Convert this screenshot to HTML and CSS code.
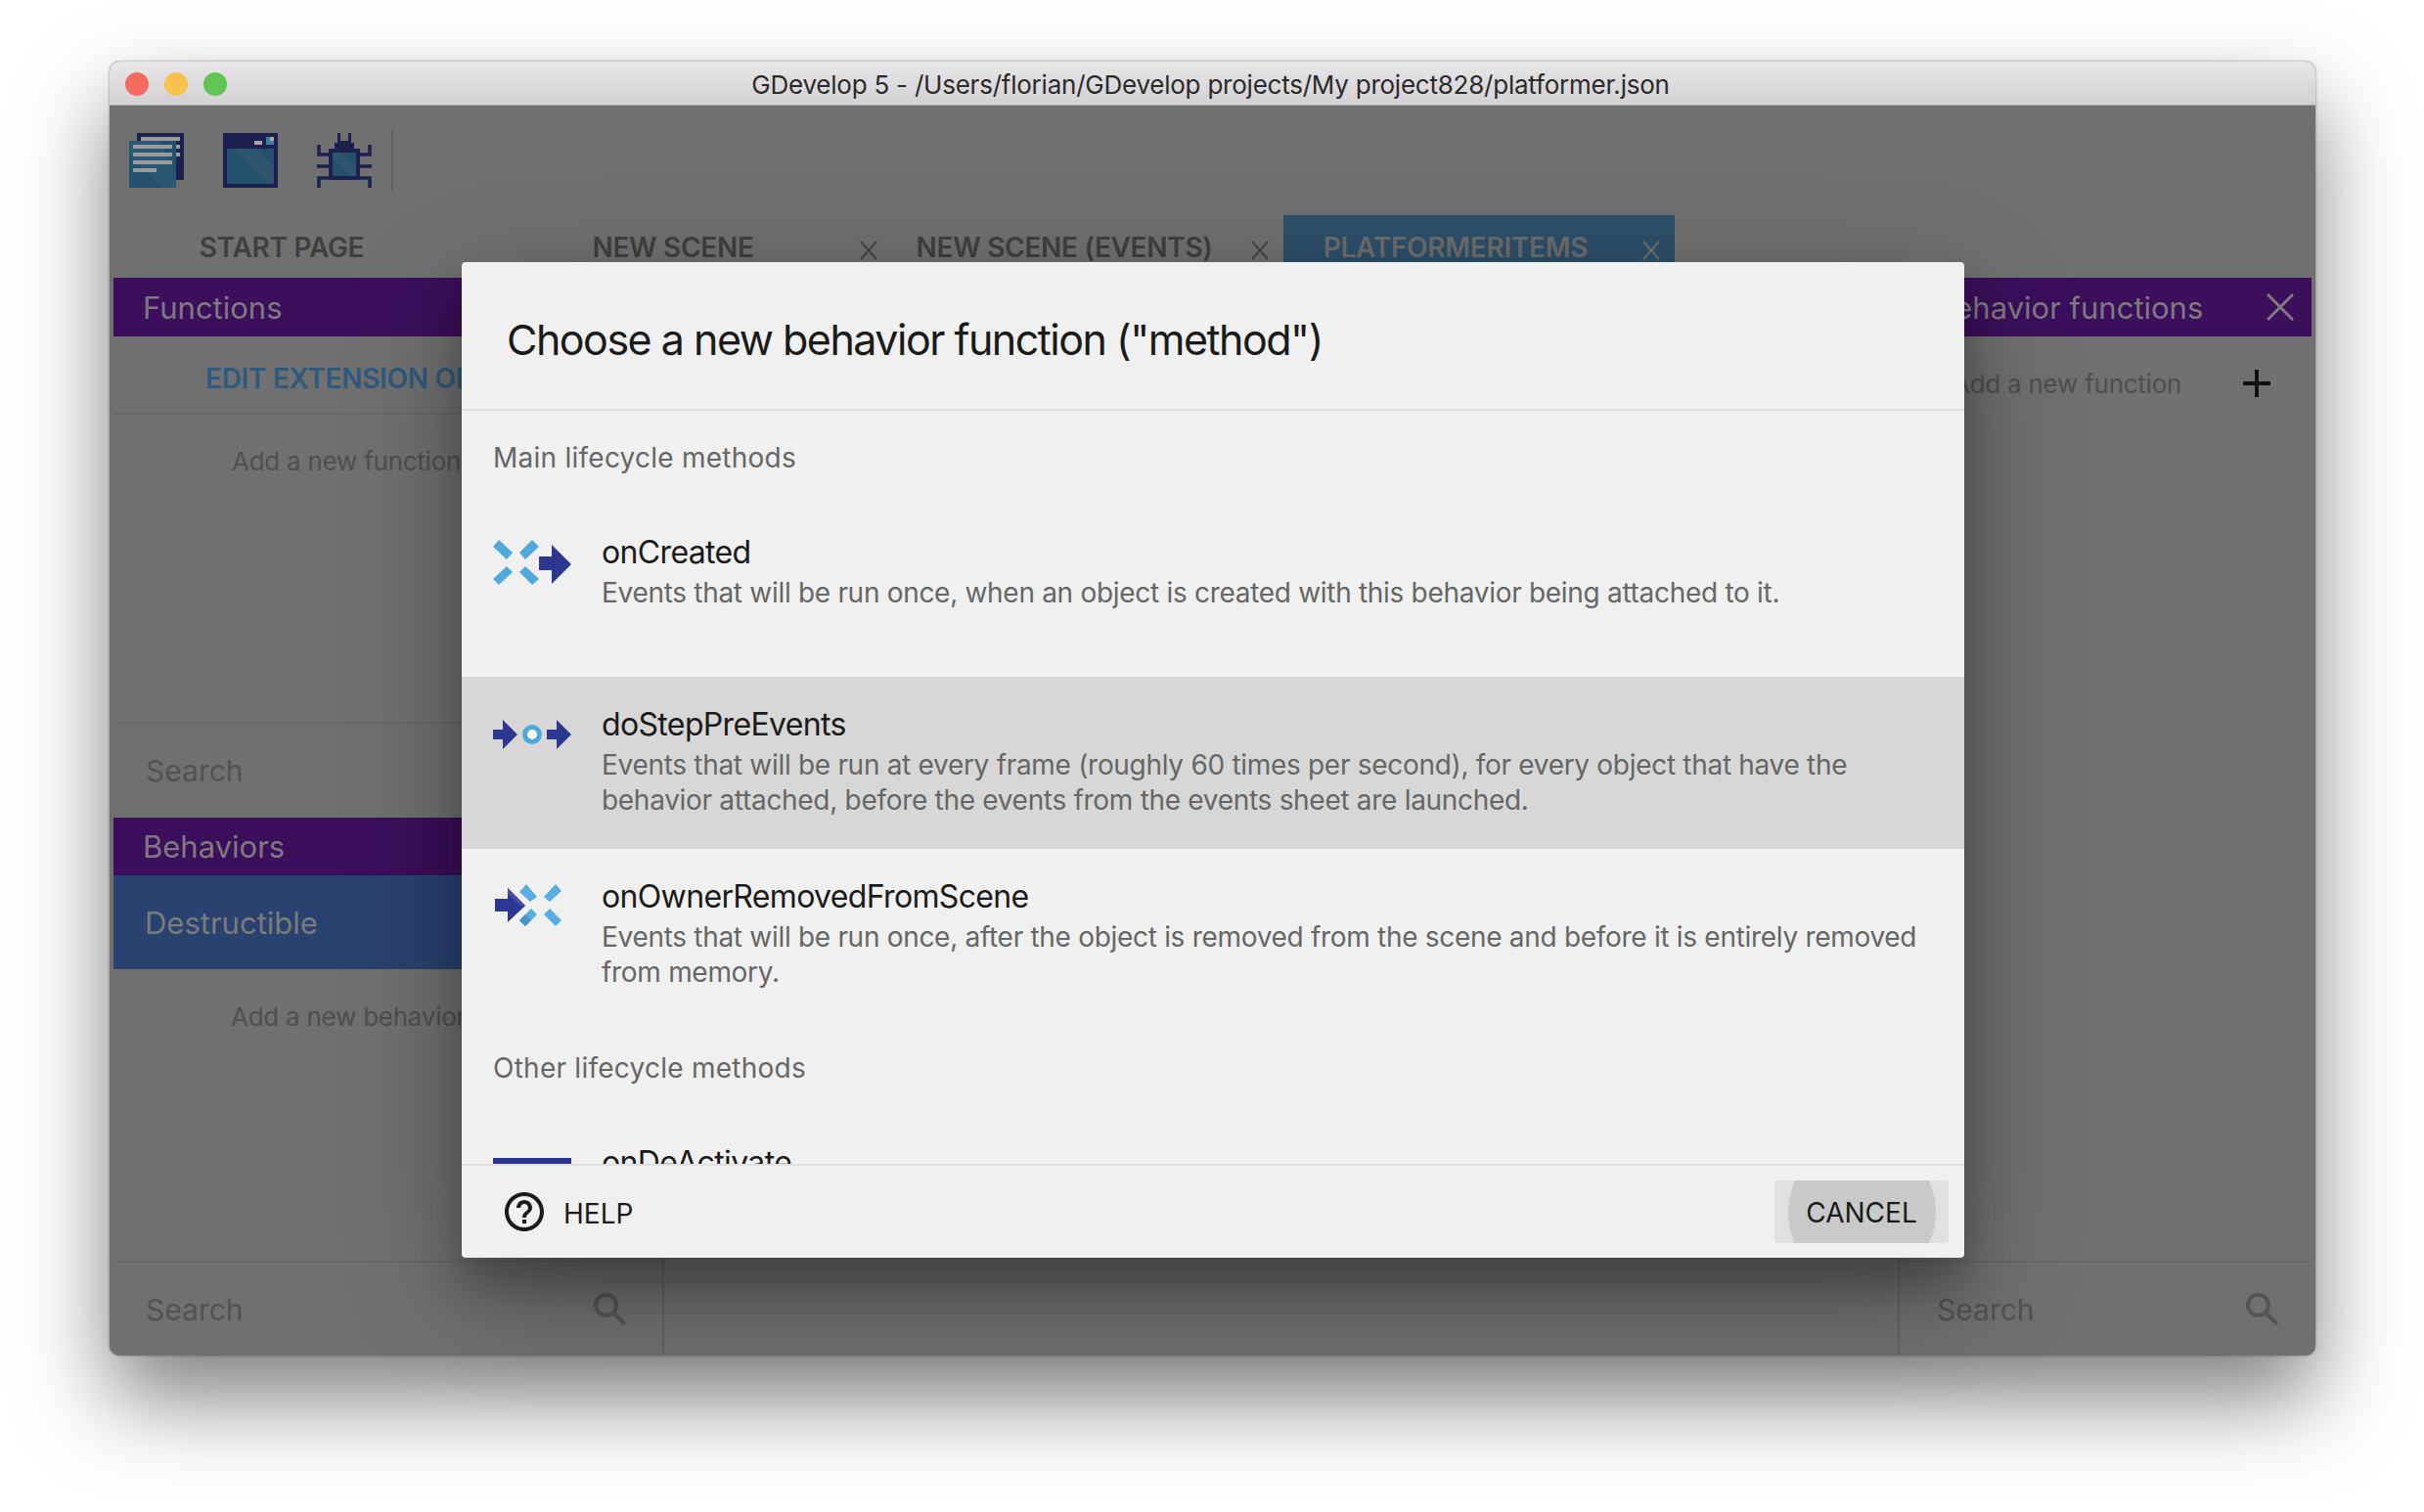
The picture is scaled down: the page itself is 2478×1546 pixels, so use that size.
FILE: index.html
```html
<!DOCTYPE html>
<html lang="en">
<head>
  <meta charset="UTF-8" />
  <title>GDevelop 5</title>
  <link rel="stylesheet" href="styles.css">
</head>
<body>
  <div class="window">
    <div class="titlebar">
      <div class="lights">
        <span class="light light-red"></span>
        <span class="light light-yellow"></span>
        <span class="light light-green"></span>
      </div>
      <div class="window-title">GDevelop 5 - /Users/florian/GDevelop projects/My project828/platformer.json</div>
    </div>

    <div class="toolbar">
      <svg class="tool-icon" viewBox="0 0 56 56">
        <rect x="8" y="0" width="48" height="48" fill="#1c2150"/>
        <rect x="12" y="4" width="40" height="4" fill="#9b9b9b"/>
        <rect x="48" y="12" width="4" height="4" fill="#9b9b9b"/>
        <rect x="48" y="20" width="4" height="4" fill="#9b9b9b"/>
        <rect x="0" y="8" width="48" height="48" fill="#23506b"/>
        <polygon points="0,8 32,8 48,40 48,56 34,56 0,24" fill="#2a5872"/>
        <rect x="4" y="12" width="40" height="4" fill="#9b9b9b"/>
        <rect x="4" y="20" width="40" height="4" fill="#9b9b9b"/>
        <rect x="4" y="28" width="40" height="4" fill="#9b9b9b"/>
        <rect x="4" y="36" width="24" height="4" fill="#9b9b9b"/>
      </svg>
      <svg class="tool-icon" viewBox="0 0 56 56">
        <rect width="56" height="56" fill="#1c2150"/>
        <rect x="4" y="16" width="48" height="36" fill="#23506b"/>
        <polygon points="12,16 36,16 52,36 52,52 46,52" fill="#30566f"/>
        <rect x="32" y="8" width="8" height="4" fill="#a9a9a9"/>
        <rect x="44" y="4" width="8" height="8" fill="#3e7f9f"/>
        <rect x="48" y="4" width="4" height="4" fill="#a9a9a9"/>
      </svg>
      <svg class="tool-icon" viewBox="0 0 56 56">
        <path d="M21 0h3v8h8V0h3v12h-14z" fill="#1c2150"/>
        <rect x="12" y="16" width="32" height="32" fill="#1c2150"/>
        <rect x="18" y="10" width="20" height="8" fill="#1c2150"/>
        <rect x="16" y="20" width="24" height="24" fill="#23506b"/>
        <polygon points="24,20 40,36 40,44 34,44 16,26 16,20" fill="#30566f"/>
        <path d="M2 12v10h10M54 12v10h-10M0 34h12M56 34h-12M2 56v-10h10M54 56v-10h-10" fill="none" stroke="#1c2150" stroke-width="3.5"/>
      </svg>
      <div class="toolbar-sep"></div>
    </div>

    <div class="tabs">
      <div class="tab"><span class="tab-label">START PAGE</span><span class="tab-close"></span></div>
      <div class="tab"><span class="tab-label">NEW SCENE</span><span class="tab-close"><svg viewBox="0 0 20 20"><path d="M2 1L18 19M18 1L2 19"/></svg></span></div>
      <div class="tab"><span class="tab-label">NEW SCENE (EVENTS)</span><span class="tab-close"><svg viewBox="0 0 20 20"><path d="M2 1L18 19M18 1L2 19"/></svg></span></div>
      <div class="tab tab-active"><span class="tab-label">PLATFORMERITEMS</span><span class="tab-close"><svg viewBox="0 0 20 20"><path d="M2 1L18 19M18 1L2 19"/></svg></span></div>
    </div>

    <div class="editor">
      <div class="panel panel-left">
        <div class="panel-head">Functions</div>
        <div class="edit-options">EDIT EXTENSION OPTIONS</div>
        <div class="add-row add-row-left">Add a new function</div>
        <div class="panel-search panel-search-mid">Search</div>
        <div class="panel-head panel-head-small">Behaviors</div>
        <div class="behavior-selected">Destructible</div>
        <div class="add-row add-row-behavior">Add a new behavior</div>
        <div class="panel-search">
          <span>Search</span>
          <svg class="search-icon" viewBox="0 0 35 35"><circle cx="13.5" cy="13.5" r="10.5"/><path d="M21 21L33 33"/></svg>
        </div>
      </div>

      <div class="panel panel-center"></div>

      <div class="panel panel-right">
        <div class="panel-head panel-head-right">
          <span>Behavior functions</span>
          <svg class="head-close" viewBox="0 0 28 28"><path d="M1 1L27 27M27 1L1 27"/></svg>
        </div>
        <div class="add-row add-row-right">
          <span>Add a new function</span>
          <svg class="plus-icon" viewBox="0 0 28 28"><path d="M14 0V28M0 14H28"/></svg>
        </div>
        <div class="panel-search">
          <span>Search</span>
          <svg class="search-icon" viewBox="0 0 35 35"><circle cx="13.5" cy="13.5" r="10.5"/><path d="M21 21L33 33"/></svg>
        </div>
      </div>
    </div>

    <div class="dialog">
      <div class="dialog-title">Choose a new behavior function ("method")</div>
      <div class="dialog-list">
        <div class="list-label">Main lifecycle methods</div>

        <div class="list-item">
          <svg class="item-icon" viewBox="0 0 80 80">
            <g fill="#4fa9dd">
              <polygon points="0,24 6,17 20,30 14,37"/>
              <polygon points="27,30 40,17 47,24 33,37"/>
              <polygon points="0,57 14,44 20,50 6,63"/>
              <polygon points="27,50 33,44 47,57 40,63"/>
            </g>
            <polygon points="47,34 60,34 60,22 80,42 60,62 60,48 47,48" fill="#2e3790"/>
          </svg>
          <div class="item-text">
            <div class="item-name">onCreated</div>
            <div class="item-desc">Events that will be run once, when an object is created with this behavior being attached to it.</div>
          </div>
        </div>

        <div class="list-item list-item-selected">
          <svg class="item-icon" viewBox="0 0 80 80">
            <polygon points="0,35 10,35 10,25 25,40 10,55 10,45 0,45" fill="#2e3790"/>
            <circle cx="40" cy="40" r="7.5" fill="#fff" stroke="#4fa9dd" stroke-width="5"/>
            <polygon points="55,35 65,35 65,25 80,40 65,55 65,45 55,45" fill="#2e3790"/>
          </svg>
          <div class="item-text">
            <div class="item-name">doStepPreEvents</div>
            <div class="item-desc">Events that will be run at every frame (roughly 60 times per second), for every object that have the behavior attached, before the events from the events sheet are launched.</div>
          </div>
        </div>

        <div class="list-item">
          <svg class="item-icon" viewBox="0 0 80 80">
            <g fill="#58aee0">
              <polygon points="27,25 34,17 45,30 38,35"/>
              <polygon points="52,30 64,17 70,24 58,35"/>
              <polygon points="27,54 39,42 45,48 33,60"/>
              <polygon points="52,48 58,42 70,54 64,60"/>
            </g>
            <polygon points="27,54 33,48 39,54 33,60" fill="#4595c6"/>
            <polygon points="2,32 15,32 15,21 33,39 15,56 15,45 2,45" fill="#2e3790"/>
            <polygon points="15,21 33,39 28,39 15,27" fill="#474c9f"/>
          </svg>
          <div class="item-text">
            <div class="item-name">onOwnerRemovedFromScene</div>
            <div class="item-desc">Events that will be run once, after the object is removed from the scene and before it is entirely removed from memory.</div>
          </div>
        </div>

        <div class="list-label">Other lifecycle methods</div>

        <div class="list-item">
          <svg class="item-icon" viewBox="0 0 80 80"><rect y="25" width="80" height="30" fill="#2e3790"/></svg>
          <div class="item-text">
            <div class="item-name">onDeActivate</div>
          </div>
        </div>
      </div>
      <div class="dialog-actions">
        <div class="help-button">
          <svg class="help-icon" viewBox="0 0 24 24"><path d="M11 18h2v-2h-2v2zm1-16C6.48 2 2 6.48 2 12s4.48 10 10 10 10-4.48 10-10S17.52 2 12 2zm0 18c-4.41 0-8-3.59-8-8s3.59-8 8-8 8 3.59 8 8-3.59 8-8 8zm0-14c-2.21 0-4 1.79-4 4h2c0-1.1.9-2 2-2s2 .9 2 2c0 2-3 1.75-3 5h2c0-2.25 3-2.5 3-5 0-2.21-1.79-4-4-4z"/></svg>
          <span class="help-label">HELP</span>
        </div>
        <div class="cancel-button"><span class="ripple"></span><span class="cancel-label">CANCEL</span></div>
      </div>
    </div>
  </div>
</body>
</html>
```

FILE: styles.css
```css
html, body {
  height: 100%;
}

body {
  margin: 0;
  padding: 63px 111px 0 112px;
  box-sizing: border-box;
  background-color: #ffffff;
  font-family: 'Inter', sans-serif;
  overflow: hidden;
}

.window {
  position: relative;
  height: 1323px;
  display: flex;
  flex-direction: column;
  background-color: #707070;
  border-radius: 10px;
  box-shadow: 0 44px 90px rgba(0, 0, 0, 0.5), 0 0 3px rgba(0, 0, 0, 0.4);
}

.titlebar {
  position: relative;
  height: 44px;
  flex: none;
  display: flex;
  align-items: center;
  justify-content: center;
  background: linear-gradient(#e8e6e8, #d2d0d2);
  border-bottom: 1px solid #a8a8a8;
  border-radius: 10px 10px 0 0;
}

.lights {
  position: absolute;
  left: 16px;
  top: 11px;
  display: flex;
  gap: 16px;
}

.light {
  width: 24px;
  height: 24px;
  border-radius: 50%;
}

.light-red { background-color: #f46a5e; }
.light-yellow { background-color: #f8c14b; }
.light-green { background-color: #61c554; }

.window-title {
  margin-top: 2px;
  margin-right: 4px;
  font-size: 26px;
  letter-spacing: -0.23px;
  color: #2a2a2a;
}

.toolbar {
  height: 112px;
  flex: none;
  display: flex;
  align-items: center;
  gap: 40px;
  padding-left: 20px;
  box-sizing: border-box;
}

.tool-icon {
  width: 56px;
  height: 56px;
}

.toolbar-sep {
  width: 2px;
  height: 64px;
  margin-left: -20px;
  background-color: #626262;
}

.tabs {
  height: 64px;
  flex: none;
  display: flex;
}

.tab {
  width: 400px;
  display: flex;
  align-items: center;
  font-size: 28px;
  font-weight: 600;
  letter-spacing: -0.3px;
  color: #403f3f;
}

.tab-active {
  background-color: #2c4f68;
  color: #6c6c6c;
}

.tab-label {
  flex: 1;
  text-align: center;
  padding-top: 2px;
}

.tab-close {
  width: 48px;
  display: flex;
  justify-content: center;
}

.tab-close svg {
  width: 20px;
  height: 20px;
  margin-top: 8px;
}

.tab-close path {
  stroke: #484848;
  stroke-width: 2.5;
  fill: none;
}

.tab-active .tab-close path {
  stroke: #6c6c6c;
}

.editor {
  flex: 1;
  display: flex;
  min-height: 0;
}

.panel {
  display: flex;
  flex-direction: column;
  box-sizing: border-box;
}

.panel-left {
  width: 565px;
  padding-left: 4px;
}

.panel-center {
  flex: 1;
  border-left: 2px solid #646464;
}

.panel-right {
  width: 427px;
  padding-right: 4px;
  border-left: 2px solid #646464;
}

.panel-head {
  height: 60px;
  flex: none;
  display: flex;
  align-items: center;
  padding-left: 30px;
  background-color: #3b0f5b;
  color: #7e7a80;
  font-size: 31px;
}

.panel-head-small {
  height: 59px;
}

.panel-head-right {
  justify-content: space-between;
  padding: 0 18px 0 36px;
}

.head-close {
  width: 28px;
  height: 28px;
}

.head-close path {
  stroke: #7e7a80;
  stroke-width: 3;
  fill: none;
}

.edit-options {
  height: 80px;
  flex: none;
  display: flex;
  align-items: center;
  padding: 7px 0 0 94px;
  box-sizing: border-box;
  border-bottom: 2px solid #686868;
  color: #2f5a7e;
  font-size: 28px;
  font-weight: 600;
  letter-spacing: -0.3px;
  white-space: nowrap;
}

.behavior-selected {
  height: 96px;
  flex: none;
  display: flex;
  align-items: center;
  padding-left: 32px;
  background-color: #2a4270;
  color: #7a7a7a;
  font-size: 31px;
}

.add-row {
  display: flex;
  align-items: center;
  color: #4f4f4f;
  font-size: 26px;
  letter-spacing: -0.25px;
  white-space: nowrap;
}

.add-row-left {
  height: 95px;
  padding-left: 121px;
}

.add-row-behavior {
  flex: 1;
  align-items: flex-start;
  padding: 33px 0 0 120px;
}

.add-row-right {
  height: 96px;
  justify-content: space-between;
  padding: 0 42px 0 54px;
}

.plus-icon {
  width: 28px;
  height: 28px;
}

.plus-icon path {
  stroke: #111111;
  stroke-width: 4;
  fill: none;
}

.panel-search {
  height: 97px;
  flex: none;
  display: flex;
  align-items: center;
  justify-content: space-between;
  padding: 0 42px 0 33px;
  box-sizing: border-box;
  border-top: 2px solid #686868;
  color: #525252;
  font-size: 30px;
  margin-top: auto;
}

.panel-right .panel-search {
  padding: 0 39px 0 38px;
}

.panel-search-mid {
  height: 98px;
  margin-top: 219px;
}

.search-icon {
  width: 35px;
  height: 35px;
  margin-right: -6px;
}

.search-icon circle,
.search-icon path {
  fill: none;
  stroke: #555555;
  stroke-width: 4;
}

.dialog {
  position: absolute;
  left: 360px;
  top: 205px;
  width: 1536px;
  height: 1018px;
  display: flex;
  flex-direction: column;
  background-color: #f0f0f0;
  border-radius: 4px;
  box-shadow: 0 38px 120px rgba(0, 0, 0, 0.3), 0 30px 40px rgba(0, 0, 0, 0.22);
}

.dialog-title {
  height: 152px;
  flex: none;
  display: flex;
  align-items: center;
  padding: 8px 0 0 46px;
  box-sizing: border-box;
  border-bottom: 2px solid #e0e0e0;
  color: #1a1a1a;
  font-size: 43px;
  letter-spacing: -1.5px;
}

.dialog-list {
  flex: 1;
  overflow: hidden;
  min-height: 0;
}

.list-label {
  height: 96px;
  display: flex;
  align-items: center;
  padding-left: 32px;
  color: #666666;
  font-size: 28px;
  letter-spacing: 0.25px;
}

.list-item {
  height: 176px;
  display: flex;
  gap: 31px;
  padding: 19px 32px 0;
  box-sizing: border-box;
}

.list-item-selected {
  background-color: #d7d7d7;
}

.item-icon {
  width: 80px;
  height: 80px;
  flex: none;
}

.item-text {
  padding-top: 8px;
}

.item-name {
  font-size: 32px;
  line-height: 44px;
  letter-spacing: -0.65px;
  color: #1a1a1a;
}

.item-desc {
  margin-top: 1px;
  font-size: 28px;
  line-height: 36px;
  letter-spacing: -0.3px;
  color: #666666;
}

.dialog-actions {
  height: 96px;
  flex: none;
  display: flex;
  align-items: center;
  justify-content: space-between;
  padding: 0 16px 0 44px;
  box-sizing: border-box;
  border-top: 2px solid #e0e0e0;
}

.help-button {
  display: flex;
  align-items: center;
  gap: 20px;
  font-size: 28px;
  color: #1a1a1a;
}

.help-icon {
  width: 48px;
  height: 48px;
  margin: 0 -4px;
  fill: #1a1a1a;
}

.help-label {
  padding-top: 3px;
}

.cancel-button {
  position: relative;
  width: 178px;
  height: 64px;
  display: flex;
  align-items: center;
  justify-content: center;
  overflow: hidden;
  background-color: #e0e0e0;
  border-radius: 4px;
  color: #1a1a1a;
  font-size: 28px;
}

.ripple {
  position: absolute;
  left: 14px;
  top: -43px;
  width: 151px;
  height: 151px;
  border-radius: 50%;
  background-color: #c9c9c9;
}

.cancel-label {
  position: relative;
  top: 1px;
}
```
